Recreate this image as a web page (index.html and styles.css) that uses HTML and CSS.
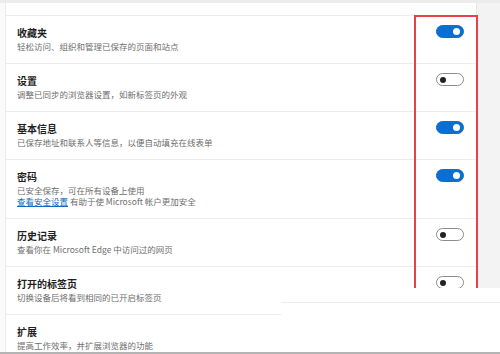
FILE: index.html
```html
<!DOCTYPE html>
<html lang="zh-CN">
<head>
    <meta charset="UTF-8">
    <meta name="viewport" content="width=device-width, initial-scale=1.0">
    <title>同步设置</title>
    <link rel="stylesheet" href="styles.css">
</head>
<body>

<div class="topbar"></div>

<div class="main">
    <div class="card">
        <div class="card-top"></div>

        <div class="item">
            <div class="item-text">
                <div class="item-title">收藏夹</div>
                <div class="item-desc">轻松访问、组织和管理已保存的页面和站点</div>
            </div>
            <span class="toggle on"></span>
        </div>

        <div class="item">
            <div class="item-text">
                <div class="item-title">设置</div>
                <div class="item-desc">调整已同步的浏览器设置，如新标签页的外观</div>
            </div>
            <span class="toggle"></span>
        </div>

        <div class="item">
            <div class="item-text">
                <div class="item-title">基本信息</div>
                <div class="item-desc">已保存地址和联系人等信息，以便自动填充在线表单</div>
            </div>
            <span class="toggle on"></span>
        </div>

        <div class="item">
            <div class="item-text">
                <div class="item-title">密码</div>
                <div class="item-desc">已安全保存，可在所有设备上使用</div>
                <div class="item-desc second"><a href="#">查看安全设置</a> 有助于使 Microsoft 帐户更加安全</div>
            </div>
            <span class="toggle on"></span>
        </div>

        <div class="item">
            <div class="item-text">
                <div class="item-title">历史记录</div>
                <div class="item-desc">查看你在 Microsoft Edge 中访问过的网页</div>
            </div>
            <span class="toggle"></span>
        </div>

        <div class="item">
            <div class="item-text">
                <div class="item-title">打开的标签页</div>
                <div class="item-desc">切换设备后将看到相同的已开启标签页</div>
            </div>
            <span class="toggle"></span>
        </div>

        <div class="item">
            <div class="item-text">
                <div class="item-title">扩展</div>
                <div class="item-desc">提高工作效率，并扩展浏览器的功能</div>
            </div>
            <span class="toggle on"></span>
        </div>
    </div>

    <div class="side"></div>
</div>

<!-- red highlight box drawn over the toggles -->
<div class="highlight"></div>

<!-- white patch pasted over the bottom right -->
<div class="patch"></div>

<div class="bottom-edge"></div>

</body>
</html>
```

FILE: styles.css
```css
html, body {
    margin: 0;
    padding: 0;
    height: 100%;
    overflow: hidden;
}

body {
    font-family: "Noto Sans CJK SC", "Noto Sans", sans-serif;
    background: #fafafa;
    position: relative;
}

.topbar {
    height: 3px;
    background: #ececec;
}

.main {
    display: flex;
    height: 351px;
}

.card {
    margin-left: 5px;
    width: 470px;
    background: #fff;
    border-left: 1px solid #ececec;
    border-right: 1px solid #e6e6e6;
}

.card-top {
    height: 12px;
}

.item {
    display: flex;
    justify-content: space-between;
    align-items: flex-start;
    border-top: 1px solid #ededed;
    padding: 9px 12px 11px 11px;
}

.item-title {
    font-size: 10px;
    line-height: 15px;
    font-weight: bold;
    color: #1f1f1f;
}

.item-desc {
    font-size: 8.5px;
    line-height: 12px;
    color: #6e6e6e;
}

.item-desc.second {
    line-height: 11px;
}

.item-desc a {
    color: #1368c4;
    text-decoration: underline;
}

.toggle {
    position: relative;
    flex: none;
    width: 28px;
    height: 13px;
    box-sizing: border-box;
    border: 1px solid #8c8c8c;
    border-radius: 7px;
    background: #fff;
}

.toggle::after {
    content: "";
    position: absolute;
    left: 3px;
    top: 2.5px;
    width: 6px;
    height: 6px;
    border-radius: 50%;
    background: #222;
}

.toggle.on {
    background: #0b6fd0;
    border-color: #0b6fd0;
}

.toggle.on::after {
    left: auto;
    right: 3px;
    top: 2px;
    width: 7px;
    height: 7px;
    background: #fff;
}

.side {
    flex: 1;
    background: #f3f3f3;
}

.highlight {
    position: absolute;
    left: 414px;
    top: 15px;
    width: 60px;
    height: 290px;
    border: 2px solid #e8414a;
}

.patch {
    position: absolute;
    left: 281px;
    top: 288px;
    right: 0;
    bottom: 0;
    background: #fff;
}

.patch::before {
    content: "";
    display: block;
    margin-top: 14px;
    border-top: 1px solid #ececec;
}

.bottom-edge {
    position: absolute;
    left: 0;
    right: 0;
    bottom: 0;
    height: 2px;
    background: #b4b4b4;
}
```
